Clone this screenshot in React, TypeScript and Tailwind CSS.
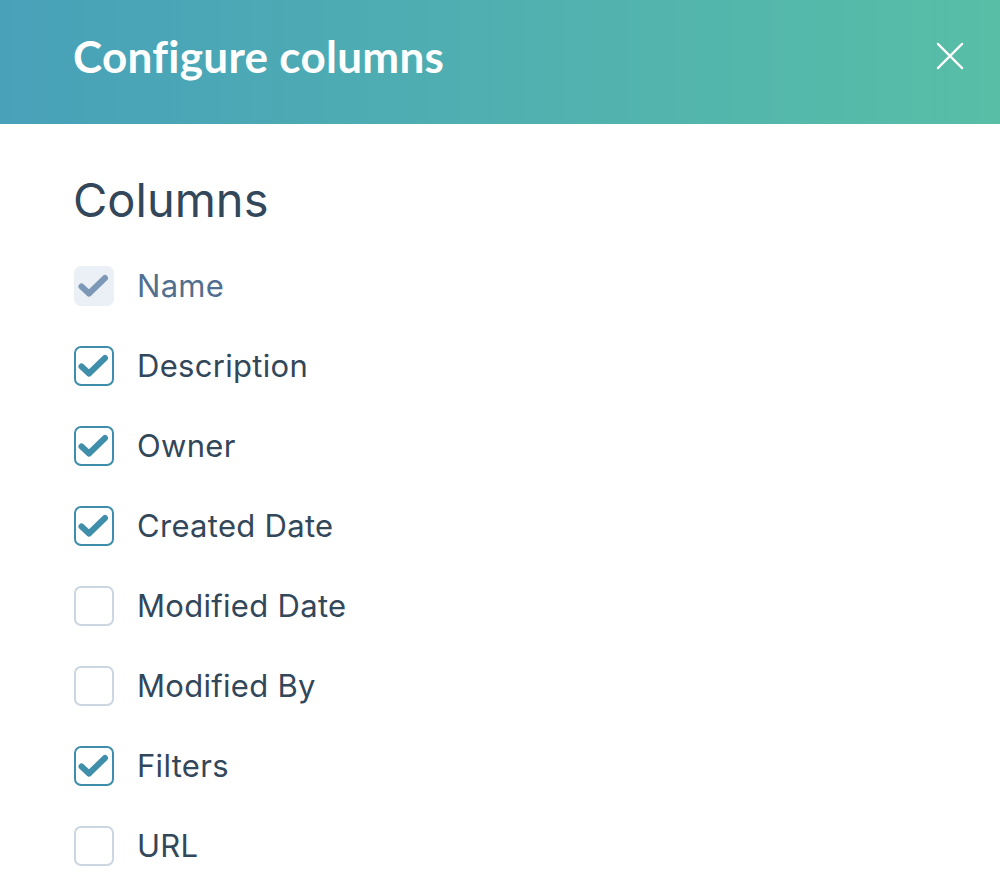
import React, { useState } from 'react';

type Column = {
  id: string;
  label: string;
  checked: boolean;
  locked?: boolean;
};

const initialColumns: Column[] = [
  { id: 'name', label: 'Name', checked: true, locked: true },
  { id: 'description', label: 'Description', checked: true },
  { id: 'owner', label: 'Owner', checked: true },
  { id: 'created', label: 'Created Date', checked: true },
  { id: 'modified', label: 'Modified Date', checked: false },
  { id: 'modifiedBy', label: 'Modified By', checked: false },
  { id: 'filters', label: 'Filters', checked: true },
  { id: 'url', label: 'URL', checked: false },
];

const CheckMark = ({ color }: { color: string }) => (
  <svg width="40" height="40" viewBox="0 0 40 40" fill="none" className="absolute -left-[2px] -top-[2px]">
    <path
      d="M7.5 20.5l7.5 7L31 12"
      stroke={color}
      strokeWidth="6"
      strokeLinecap="round"
      strokeLinejoin="round"
    />
  </svg>
);

const App: React.FC = () => {
  const [columns, setColumns] = useState<Column[]>(initialColumns);

  const toggle = (id: string) => {
    setColumns((prev) =>
      prev.map((c) => (c.id === id && !c.locked ? { ...c, checked: !c.checked } : c))
    );
  };

  return (
    <div className="w-[1000px] h-[892px] bg-white overflow-hidden" style={{ fontFamily: 'Inter, "Noto Sans", sans-serif' }}>
      <header className="h-[124px] flex items-center justify-between pl-[73px] pr-[36px] pb-[12px] bg-gradient-to-r from-[#48a1b9] to-[#58bea6]">
        <h1 className="text-white text-[44px] font-bold tracking-[0.3px]" style={{ fontFamily: 'Lato, sans-serif' }}>
          Configure columns
        </h1>
        <button className="w-[28px] h-[28px] flex items-center justify-center cursor-pointer">
          <svg width="30" height="30" viewBox="0 0 30 30" fill="none">
            <path d="M2 2l26 26M28 2L2 28" stroke="white" strokeWidth="2.4" strokeLinecap="round" />
          </svg>
        </button>
      </header>

      <div className="pl-[73px] pt-[48px]">
        <h2 className="text-[#33475b] text-[47px] leading-[56px] mb-[18px]">Columns</h2>
        <ul className="flex flex-col">
          {columns.map((c) => (
            <li key={c.id} className="h-[80px] flex items-center gap-[23px]">
              <button
                onClick={() => toggle(c.id)}
                className={`relative w-[40px] h-[40px] rounded-[7px] ml-px ${
                  c.locked
                    ? 'bg-[#eaf0f6] border-2 border-[#eaf0f6]'
                    : c.checked
                    ? 'border-2 border-[#3e8eab] bg-white'
                    : 'border-2 border-[#cbd6e2] bg-white'
                }`}
              >
                {c.checked && <CheckMark color={c.locked ? '#7c98b6' : '#3f8fab'} />}
              </button>
              <span
                className={`text-[31px] tracking-[0.3px] ${c.locked ? 'text-[#516f90]' : 'text-[#33475b]'}`}
              >
                {c.label}
              </span>
            </li>
          ))}
        </ul>
      </div>
    </div>
  );
};

export default App;
